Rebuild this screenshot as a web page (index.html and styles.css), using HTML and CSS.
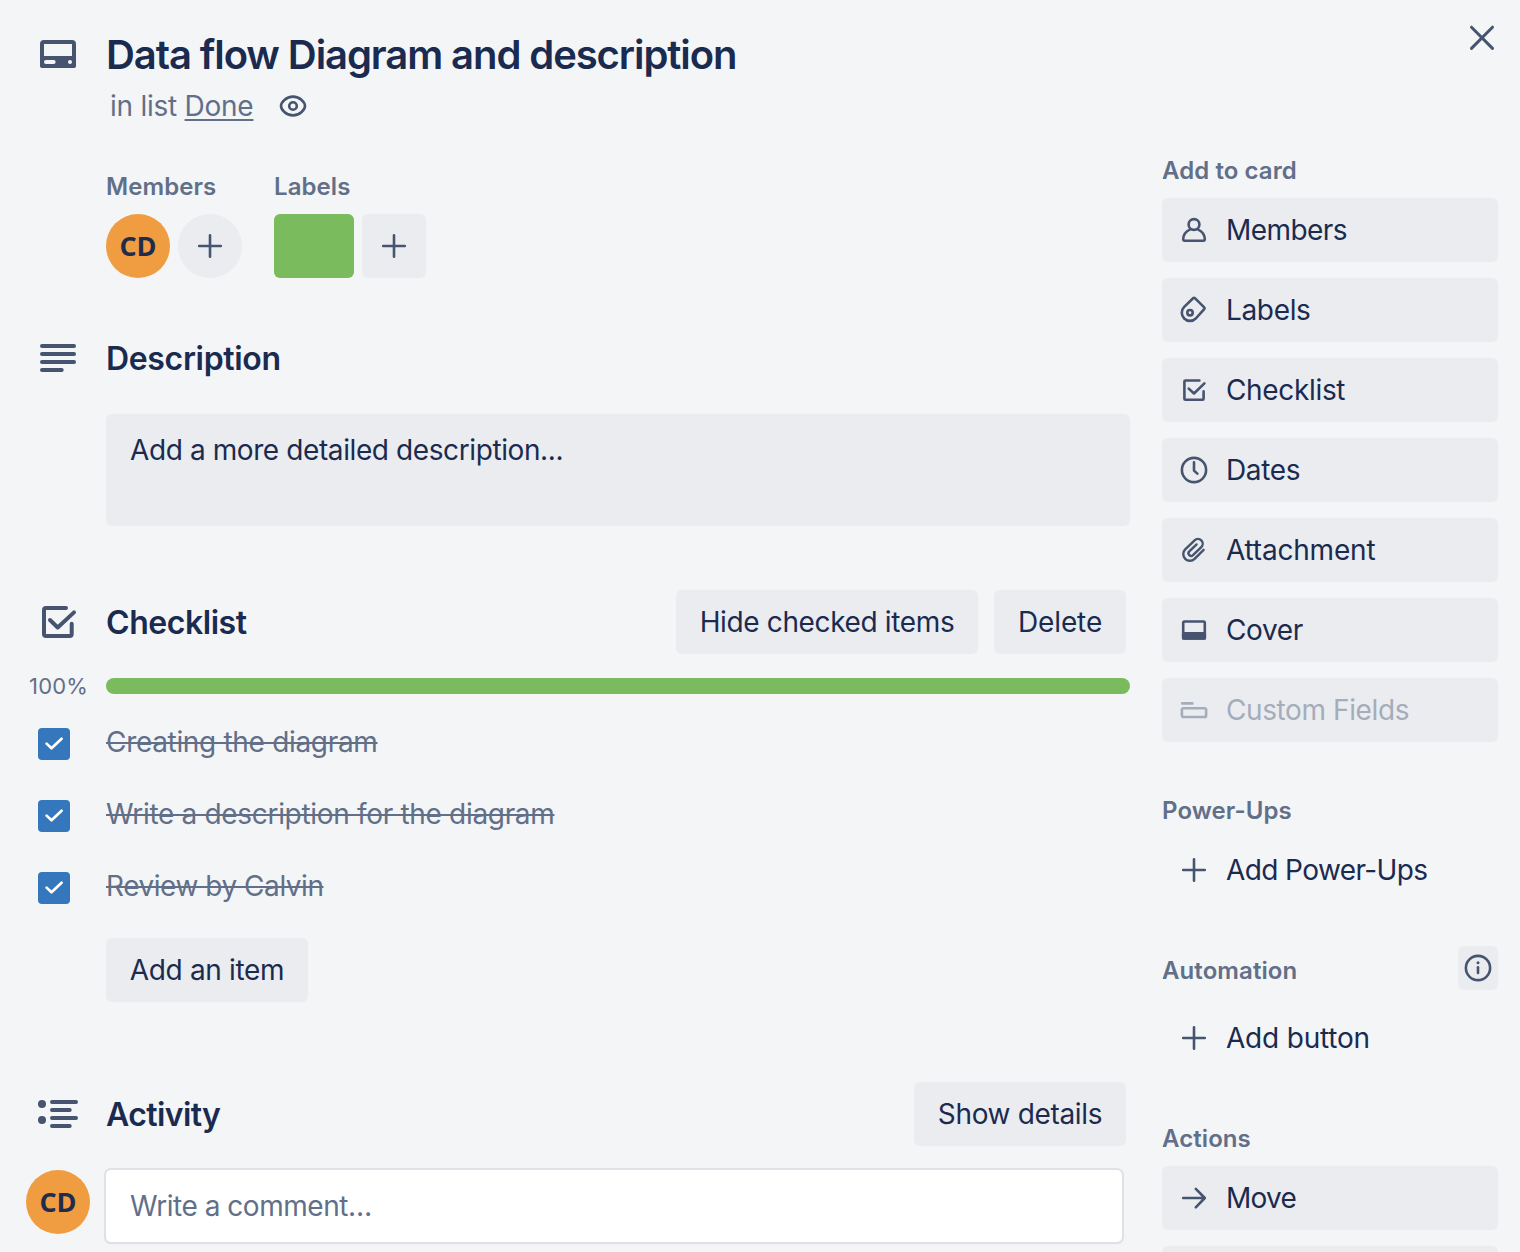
FILE: index.html
```
<!DOCTYPE html>
<html lang="en">
<head>
<meta charset="utf-8">
<title>Data flow Diagram and description</title>
<link rel="stylesheet" href="styles.css">
</head>
<body>
<svg class="sprite" aria-hidden="true">
  <symbol id="plus" viewBox="0 0 32 32"><path d="M16 5.2v21.6M5.2 16h21.6"/></symbol>
  <symbol id="check" viewBox="0 0 32 32"><path d="M8.6 15.6l4.9 4.7 10.1-9.6"/></symbol>
</svg>
<div class="card">
  <main class="main">
    <header class="row header">
      <svg class="icon-lg" viewBox="0 0 48 48"><rect x="8" y="12" width="32" height="24" rx="2"/><path class="solid" d="M8 28h32v8H8z"/><path class="cut" d="M12 32h7.6"/><circle class="cut-dot" cx="36" cy="32" r="2"/></svg>
      <div>
        <h1 class="title">Data flow Diagram and description</h1>
        <p class="subtitle"><span>in list <a class="list-link">Done</a></span>
          <svg class="icon eye" viewBox="0 0 32 32"><path d="M4 16C4 12.6 9 6.6 16 6.6S28 12.6 28 16 23 25.4 16 25.4 4 19.4 4 16z"/><circle cx="16" cy="16" r="3.8"/></svg>
        </p>
      </div>
    </header>

    <section class="meta">
      <div>
        <h3 class="label">Members</h3>
        <div class="chips">
          <span class="avatar">CD</span>
          <button class="add round"><svg class="icon"><use href="#plus"/></svg></button>
        </div>
      </div>
      <div>
        <h3 class="label">Labels</h3>
        <div class="chips">
          <span class="swatch"></span>
          <button class="add"><svg class="icon"><use href="#plus"/></svg></button>
        </div>
      </div>
    </section>

    <section class="description">
      <div class="row">
        <svg class="icon-lg" viewBox="0 0 48 48"><path d="M8 12h32M8 20h32M8 28h32M8 36h19.7"/></svg>
        <h2 class="heading">Description</h2>
      </div>
      <div class="desc-box">Add a more detailed description...</div>
    </section>

    <section class="checklist">
      <div class="row bar">
        <svg class="icon-lg" viewBox="0 0 48 48"><path d="M32 10H12q-2 0-2 2v24q0 2 2 2h23.7q2 0 2-2V25.7M16 22l7.7 7.5L40 14.4"/></svg>
        <h2 class="heading check-heading">Checklist</h2>
        <div class="actions">
          <button class="btn hide-btn">Hide checked items</button>
          <button class="btn delete-btn">Delete</button>
        </div>
      </div>
      <div class="progress">
        <span class="percent">100%</span>
        <div class="track"><div class="fill" style="width:100%"></div></div>
      </div>
      <ul class="items">
        <li class="item"><svg class="box"><use href="#check"/></svg><s class="creating">Creating the diagram</s></li>
        <li class="item"><svg class="box"><use href="#check"/></svg><s class="writing">Write a description for the diagram</s></li>
        <li class="item"><svg class="box"><use href="#check"/></svg><s class="review">Review by Calvin</s></li>
      </ul>
      <button class="btn add-item">Add an item</button>
    </section>

    <section class="activity">
      <div class="row bar">
        <svg class="icon-lg" viewBox="0 0 48 48"><circle class="dot" cx="8" cy="14" r="4"/><circle class="dot" cx="8" cy="30" r="4"/><path d="M18 12h24M18 20h17.7M18 28h24M18 36h17.7"/></svg>
        <h2 class="heading act-heading">Activity</h2>
        <div class="actions"><button class="btn show-btn">Show details</button></div>
      </div>
      <div class="comment-row">
        <span class="avatar">CD</span>
        <div class="comment">Write a comment…</div>
      </div>
    </section>
  </main>

  <aside class="side">
    <h3 class="label add-label">Add to card</h3>
    <div class="stack">
      <button class="side-btn members"><svg class="icon" viewBox="0 0 32 32"><circle cx="16" cy="10.5" r="5.4"/><path d="M11.8 15.6C8 17.3 5.2 21 5.2 25.6c0 .7.4 1.1 1 1.1h19.6c.6 0 1-.4 1-1.1 0-4.6-2.8-8.3-6.6-10"/></svg>Members</button>
      <button class="side-btn"><svg class="icon" viewBox="0 0 32 32"><path d="M6.2 12.9l8.9-8.7q.9-.8 1.8 0l9.3 9.2q.8.9 0 1.8l-8.4 9.3A8.2 8.2 0 0 1 6.2 12.9z"/><circle cx="12" cy="18.7" r="2.7"/></svg>Labels</button>
      <button class="side-btn"><svg class="icon" viewBox="0 0 32 32"><path d="M21.4 6.5H7.4q-1 0-1 1v17.2q0 1 1 1h17.2q1 0 1-1V17.4M10.7 14.6l5.3 4.9L26.4 9.4"/></svg>Checklist</button>
      <button class="side-btn"><svg class="icon" viewBox="0 0 32 32"><circle cx="16" cy="16" r="12.1"/><path d="M16 8.3v8.3l3.4 3"/></svg>Dates</button>
      <button class="side-btn attach"><svg class="icon clip" viewBox="0 0 32 32"><path d="M25.6 15.8l-9 9a6.6 6.6 0 0 1-9.4-9.4l9.4-9a4.7 4.7 0 0 1 6.7 6.7L15 21.1a2.6 2.6 0 0 1-3.7-3.7L18.6 10.4"/></svg>Attachment</button>
      <button class="side-btn"><svg class="icon" viewBox="0 0 32 32"><rect x="5.2" y="7.5" width="21.6" height="17" rx="1.2"/><path class="solid" d="M5.2 19.2h21.6v5.3H5.2z"/></svg>Cover</button>
      <button class="side-btn disabled"><svg class="icon" viewBox="0 0 32 32"><path d="M4.2 9.4h10.2"/><rect x="3.9" y="14.2" width="24.2" height="8.8" rx="1.6"/></svg>Custom Fields</button>
    </div>
    <h3 class="label section-label">Power-Ups</h3>
    <button class="side-btn plain powerups"><svg class="icon"><use href="#plus"/></svg>Add Power-Ups</button>
    <div class="auto-head">
      <h3 class="label">Automation</h3>
      <button class="info"><svg class="icon" viewBox="0 0 32 32"><circle cx="16" cy="16" r="12.1"/><path d="M16 15.3v5.6"/><circle class="dot" cx="16" cy="10.7" r="1.5"/></svg></button>
    </div>
    <button class="side-btn plain add-button"><svg class="icon"><use href="#plus"/></svg>Add button</button>
    <h3 class="label section-label">Actions</h3>
    <div class="stack">
      <button class="side-btn move"><svg class="icon" viewBox="0 0 32 32"><path d="M5.2 16h21M17.8 6.9l9 9.1-9 9.4"/></svg>Move</button>
      <button class="side-btn" aria-label="Copy"></button>
    </div>
  </aside>
  <button class="close" aria-label="Close"><svg viewBox="0 0 32 32"><path d="M5.5 5.2l21 21.2M26.5 5.2l-21 21.2"/></svg></button>
</div>
</body>
</html>
```
FILE: styles.css
```
* { box-sizing: border-box; }

body {
  margin: 0;
  background: #f4f5f7;
  color: #1a2b4f;
  font: 400 28px/40px Inter, "Liberation Sans", sans-serif;
  letter-spacing: -0.34px;
}

h1, h2, h3, p, ul { margin: 0; padding: 0; }

button {
  border: 0;
  padding: 0;
  background: #ebecef;
  color: inherit;
  font: inherit;
  letter-spacing: inherit;
  border-radius: 6px;
}

svg {
  display: block;
  flex: none;
  fill: none;
  stroke: #465470;
  stroke-linecap: round;
  stroke-linejoin: round;
}

.sprite { position: absolute; width: 0; height: 0; }
.icon { width: 32px; height: 32px; stroke-width: 2.6; }
.icon-lg { width: 48px; height: 48px; margin-left: 34px; stroke-width: 4; }
.solid { fill: #465470; }
.cut { stroke: #f4f5f7; stroke-width: 4; }
.cut-dot { fill: #f4f5f7; stroke: none; }
.dot { fill: #465470; stroke: none; }
.clip { stroke-width: 2.4; }

.card {
  position: relative;
  display: grid;
  grid-template-columns: 1130px 336px;
  column-gap: 32px;
  height: 1252px;
  overflow: hidden;
}

.main { padding-top: 30px; }

.row {
  display: grid;
  grid-template-columns: 106px 1fr auto;
}

.title {
  font-size: 40px;
  font-weight: 600;
  line-height: 50px;
  letter-spacing: -1.08px;
  white-space: nowrap;
}

.subtitle {
  display: flex;
  align-items: center;
  gap: 24px;
  height: 52px;
  padding-left: 4px;
  color: #626f88;
  letter-spacing: -0.25px;
}

.list-link {
  text-decoration: underline;
  text-decoration-thickness: 2px;
  text-underline-offset: 3px;
  text-decoration-skip-ink: none;
}

.label {
  color: #626f88;
  font-size: 24px;
  font-weight: 600;
  line-height: 30px;
  letter-spacing: 0.08px;
}

.meta {
  display: flex;
  gap: 32px;
  margin-top: 40px;
  padding-left: 106px;
}

.chips { display: flex; gap: 8px; margin-top: 12px; }

.avatar {
  width: 64px;
  height: 64px;
  border-radius: 50%;
  background: #f09d42;
  color: #1f2c4b;
  font: 700 27px/63px "Open Sans", "Noto Sans", sans-serif;
  letter-spacing: 0;
  text-align: center;
}

.swatch { width: 80px; height: 64px; border-radius: 6px; background: #7abb5d; }
.add { display: grid; place-items: center; width: 64px; height: 64px; }
.round { border-radius: 50%; }

.description { margin-top: 56px; }

.heading {
  font-size: 32px;
  font-weight: 600;
  line-height: 49px;
  letter-spacing: -0.33px;
}

.check-heading { letter-spacing: -0.45px; }
.act-heading { letter-spacing: -0.6px; }

.desc-box {
  height: 112px;
  margin: 31px 0 0 106px;
  padding: 16px 24px;
  border-radius: 6px;
  background: #ebecef;
  letter-spacing: -0.4px;
}

.checklist { margin-top: 64px; }
.bar { align-items: center; height: 64px; }
.actions { display: flex; gap: 16px; padding-right: 4px; }
.btn { height: 64px; text-align: center; }
.hide-btn { width: 302px; letter-spacing: -0.36px; }
.delete-btn { width: 132px; letter-spacing: -0.1px; }
.show-btn { width: 212px; }

.progress {
  display: flex;
  align-items: center;
  height: 32px;
  margin-top: 16px;
}

.percent {
  width: 106px;
  padding-left: 29px;
  color: #626f88;
  font-size: 22px;
  letter-spacing: 0.2px;
}

.track { flex: 1; height: 16px; border-radius: 8px; }
.fill { height: 100%; border-radius: 8px; background: #7abb5d; }

.items { margin-top: 6px; list-style: none; color: #626f88; }
.item { display: flex; align-items: center; height: 72px; padding-left: 38px; }
.item s { margin-left: 36px; padding-bottom: 4px; text-decoration-thickness: 2px; }
.creating { letter-spacing: -0.32px; }
.writing { letter-spacing: -0.32px; }
.review { letter-spacing: -0.46px; }

.box {
  width: 32px;
  height: 32px;
  border-radius: 4px;
  background: #3577bd;
  stroke: #fff;
  stroke-width: 2.7;
}

.add-item { display: block; width: 202px; margin: 14px 0 0 106px; }

.activity { margin-top: 80px; }
.comment-row { display: flex; gap: 16px; margin-top: 24px; padding-left: 26px; }

.comment {
  width: 1016px;
  height: 72px;
  padding: 0 24px;
  border-radius: 5px;
  background: #fff;
  box-shadow: 0 0 0 2px #dfe1e7, 0 1px 1px 1px #d0d4dd;
  color: #626f88;
  line-height: 73px;
  letter-spacing: -0.47px;
}

.side { padding-top: 156px; }
.add-label { margin-bottom: 12px; }
.stack { display: grid; gap: 16px; }

.side-btn {
  display: flex;
  align-items: center;
  gap: 16px;
  width: 100%;
  height: 64px;
  padding-left: 16px;
}

.members { letter-spacing: -0.55px; }
.attach { letter-spacing: -0.2px; }
.move { letter-spacing: -0.75px; }
.plain { background: transparent; }
.powerups { letter-spacing: -0.6px; }
.add-button { letter-spacing: -0.2px; }
.disabled { color: #a5adbb; letter-spacing: -0.4px; }
.disabled svg { stroke: #a5adbb; }
.section-label { margin: 54px 0 12px; }

.auto-head {
  display: flex;
  justify-content: space-between;
  align-items: center;
  height: 44px;
  margin: 44px 0 16px;
}

.auto-head .label { padding-top: 5px; }
.info { display: grid; place-items: center; width: 40px; height: 44px; }

.close { position: absolute; top: 22px; left: 1466px; background: none; }
.close svg { width: 32px; height: 32px; stroke-width: 3; }
```
